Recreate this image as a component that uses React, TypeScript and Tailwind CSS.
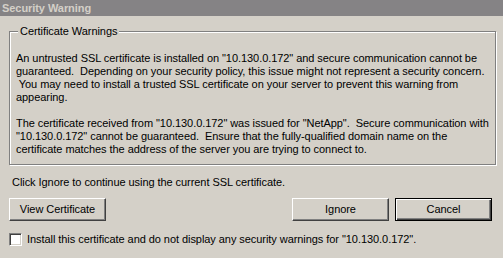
import React from "react";

const FONT = { fontFamily: '"Liberation Sans", Arial, sans-serif' };

function Button({ label, isDefault }: { label: string; isDefault?: boolean }) {
  return (
    <button
      className={`h-[23px] w-[97px] bg-[#d4d0c8] text-[11px] text-black ${
        isDefault
          ? "border border-black shadow-[inset_1px_1px_0_#fff,inset_-1px_-1px_0_#404040,inset_-2px_-2px_0_#808080]"
          : "border border-t-white border-l-white border-r-[#404040] border-b-[#404040] shadow-[inset_-1px_-1px_0_#808080]"
      }`}
    >
      {label}
    </button>
  );
}

export default function App() {
  return (
    <div className="w-[503px] h-[258px] bg-[#d4d0c8] text-black text-[11px] leading-[13px] tracking-[-0.06px] overflow-hidden" style={FONT}>
      {/* title bar */}
      <div className="h-[16px] bg-[#858385] flex items-center pl-[2px]">
        <span className="font-bold text-[#d4d0c8] text-[11px]">Security Warning</span>
      </div>

      <div className="pl-[9px] pr-[7px]">
        {/* group box */}
        <div className="relative mt-[15px] border border-[#808080] shadow-[1px_1px_0_#fff,inset_1px_1px_0_#fff] pt-[20px] pb-[8px] pl-[6px]">
          <span className="absolute left-[8px] top-[-7px] px-[2px] bg-[#d4d0c8] leading-[13px]">Certificate Warnings</span>
          <div className="whitespace-pre">
            <div>An untrusted SSL certificate is installed on "10.130.0.172" and secure communication cannot be</div>
            <div>guaranteed.  Depending on your security policy, this issue might not represent a security concern.</div>
            <div> You may need to install a trusted SSL certificate on your server to prevent this warning from</div>
            <div>appearing.</div>
            <div className="h-[13px]" />
            <div>The certificate received from "10.130.0.172" was issued for "NetApp".  Secure communication with</div>
            <div>"10.130.0.172" cannot be guaranteed.  Ensure that the fully-qualified domain name on the</div>
            <div>certificate matches the address of the server you are trying to connect to.</div>
          </div>
        </div>

        <div className="mt-[11px] pl-[3px]">Click Ignore to continue using the current SSL certificate.</div>

        <div className="mt-[9px] flex items-center pr-[4px]">
          <Button label="View Certificate" />
          <div className="flex-1" />
          <Button label="Ignore" />
          <div className="w-[6px]" />
          <Button label="Cancel" isDefault />
        </div>

        <div className="mt-[12px] flex items-center gap-[5px]">
          <span className="w-[13px] h-[13px] bg-white border border-t-[#808080] border-l-[#808080] border-r-white border-b-white shadow-[inset_1px_1px_0_#404040,inset_-1px_-1px_0_#d4d0c8]" />
          <span>Install this certificate and do not display any security warnings for "10.130.0.172".</span>
        </div>
      </div>
    </div>
  );
}
